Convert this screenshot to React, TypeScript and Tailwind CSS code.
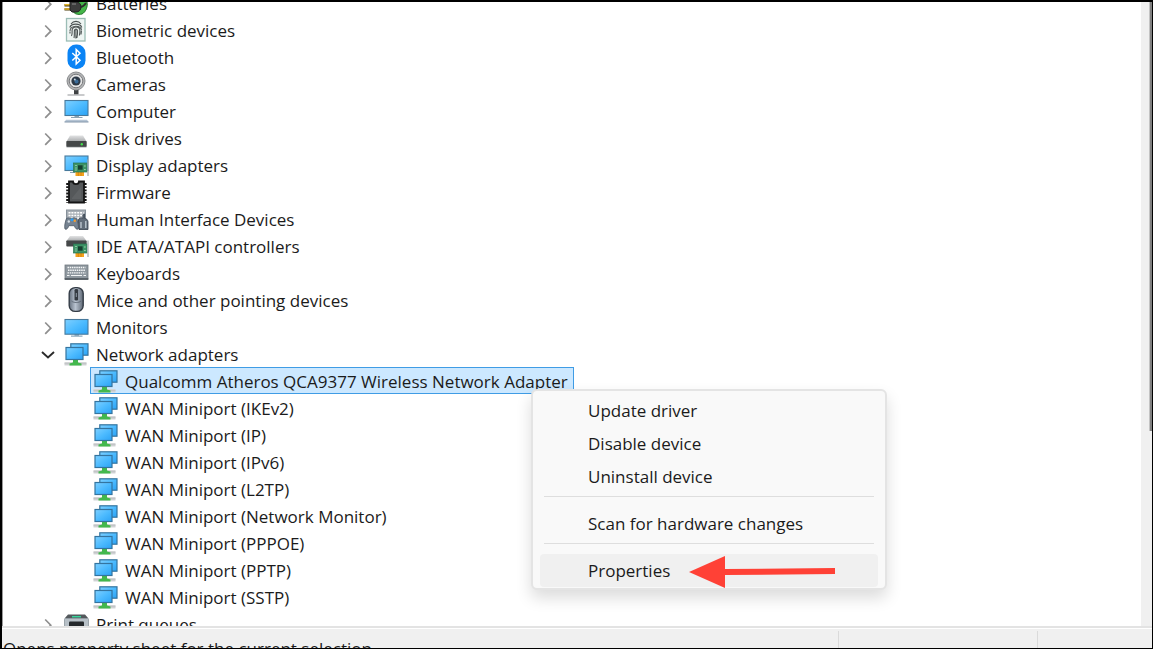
import type { ReactNode } from "react";

function Glyph({ children }: { children: ReactNode }) {
  return (
    <svg viewBox="0 0 26 27" className="h-[27px] w-[26px] shrink-0" aria-hidden="true">
      <defs>
        <linearGradient id="screen" x1="0" y1="0" x2="1" y2="1">
          <stop offset="0" stopColor="#7fd0ff" />
          <stop offset="0.5" stopColor="#4dbbff" />
          <stop offset="1" stopColor="#2ba2f5" />
        </linearGradient>
        <linearGradient id="metal" x1="0" y1="0" x2="0" y2="1">
          <stop offset="0" stopColor="#e2e3e4" />
          <stop offset="1" stopColor="#a9abad" />
        </linearGradient>
        <linearGradient id="mouse" x1="0" y1="0" x2="1" y2="0">
          <stop offset="0" stopColor="#66717f" />
          <stop offset="0.45" stopColor="#b9c3d0" />
          <stop offset="1" stopColor="#5d6774" />
        </linearGradient>
      </defs>
      {children}
    </svg>
  );
}

function Card() {
  return (
    <g>
      <rect x="11.5" y="20.5" width="8.5" height="4.5" fill="#f5a21c" />
      <path d="M14.3 21v4M17 21v4" stroke="#c87c10" strokeWidth="0.7" />
      <rect x="9.500" y="12" width="13.500" height="9" fill="#3d9366" stroke="#2a7550" strokeWidth="0.7" />
      <rect x="14" y="14.300" width="4.600" height="4.400" fill="#173f30" />
      <path d="M11.300 14.500h1.400M11.300 17h1.400M11.300 19h1.400M20.200 15h1.400M20.200 18.500h1.400" stroke="#a9dcb5" strokeWidth="1" />
      <path d="M24 8.500v16.500" stroke="#a9aeb1" strokeWidth="1.300" />
    </g>
  );
}

const icons: Record<string, ReactNode> = {
  battery: (
    <g>
      <path d="M10 18c2-5 8-7 13-5 1 4-1 10-5 12-4 1-8 0-9-3z" fill="#43b649" stroke="#23742a" />
      <path d="M0.5 16.200h7M0.5 20.400h7" stroke="#4a3a08" strokeWidth="2.400" />
      <path d="M0.5 15.800h6M0.5 20h6" stroke="#e7b92c" strokeWidth="1.500" />
      <path d="M6 13h6c3 0 5 2 5 5s-2 5-5 5H8l-2-2z" fill="#3d3d3d" stroke="#222" />
      <path d="M16 18c2 0 4-1 6-4" stroke="#2c2c2c" strokeWidth="2" fill="none" />
      <path d="M8 15h4" stroke="#8b8b8b" />
    </g>
  ),
  fingerprint: (
    <g fill="none">
      <rect x="2.500" y="2.500" width="18.500" height="22.500" fill="#eef5f3" stroke="#9bbdb6" strokeWidth="1.300" />
      <g stroke="#4b5252" strokeWidth="1.100">
        <path d="M7 8c2.500-3.500 7.500-3.500 10 0M5.800 11.500c1.500-4.500 10.500-4.500 12 0M6 15c0-6 11.500-6.500 11.500-.5" />
        <path d="M7.500 20c1-2 .5-4 .6-6 .6-4 7.200-4 7.800 0 .2 2-.2 3.500-.5 5.500M10 22c.6-2.500.2-5 .4-7.500.5-1.800 2.700-1.800 3.100 0 .2 3-.1 5-.6 7.500M11.900 14v8.500M17.400 15l-.4 3.500M6 15.500v2" />
      </g>
    </g>
  ),
  bluetooth: (
    <g>
      <rect x="3.500" y="1.500" width="18" height="24.500" rx="8.500" fill="#0a84f5" />
      <path d="M8.300 10l7.700 7.300-3.800 3.700V6.500l3.800 3.700-7.700 7.300" fill="none" stroke="#fff" strokeWidth="1.500" />
    </g>
  ),
  camera: (
    <g>
      <rect x="10" y="20" width="4.500" height="4.500" fill="#3f4143" />
      <path d="M3.500 25h17" stroke="#a5a7a9" strokeWidth="1.200" />
      <circle cx="12" cy="11" r="9" fill="#b4b5b6" stroke="#8b8d8f" strokeWidth="1" />
      <circle cx="12" cy="11" r="6.800" fill="#e4e4e4" stroke="#77797c" strokeWidth="1" />
      <circle cx="12" cy="11" r="4.600" fill="#2c3947" />
      <circle cx="12.500" cy="11.500" r="2" fill="#3a6c99" />
      <circle cx="10.800" cy="9.600" r="1" fill="#c4d6e4" />
    </g>
  ),
  computer: (
    <g>
      <path d="M10.500 18.500h4.500v1.500h3.500v1H7v-1h3.500z" fill="#8ca3b3" />
      <rect x="1" y="3.500" width="23" height="15" fill="url(#screen)" stroke="#47799c" strokeWidth="1.100" />
      <path d="M2 22.800h21l1.500 2.200H.5z" fill="#b4c3d3" />
      <path d="M.5 25h24" stroke="#8396aa" strokeWidth="1" />
    </g>
  ),
  disk: (
    <g>
      <path d="M6 11.500h13l3.500 6H2.500z" fill="url(#metal)" />
      <rect x="2.300" y="17" width="20.400" height="6" rx="0.800" fill="#454849" />
      <path d="M2.500 23.300h20" stroke="#b8babb" strokeWidth="0.800" />
      <circle cx="17.800" cy="20.300" r="1.200" fill="#43e04b" />
    </g>
  ),
  display: (
    <g>
      <rect x="1" y="5" width="23" height="14.500" fill="url(#screen)" stroke="#47799c" strokeWidth="1.100" />
      <path d="M6 21.500h5" stroke="#8ca3b3" />
      <Card />
    </g>
  ),
  firmware: (
    <g>
      <path d="M5 3.500h4c0 3.500 6 3.500 6 0h5v21H5z" fill="#55585a" stroke="#151515" strokeWidth="1.800" />
      <path d="M3.500 5v20M21.300 5v20" stroke="#151515" strokeWidth="2.600" strokeDasharray="1.900 1.300" />
      <path d="M8 20l9-11v12H8z" fill="#66696b" opacity="0.600" />
    </g>
  ),
  hid: (
    <g>
      <rect x="2.500" y="5" width="19" height="13" fill="#a8afb6" stroke="#87919a" />
      <path d="M4.500 7.800h15M4.500 10.500h15M4.500 13h15" stroke="#fff" strokeWidth="1.500" strokeDasharray="2 .9" />
      <path d="M2.500 13.500c2-1.200 4-.5 5 .2 1-.7 3-1.400 5-.2 1.200 3 2.500 8 1.700 10.500-1.700.8-3-.6-3.800-3.300H4.800C4 23.300 2.500 25 1 24c-.8-2.500.2-7.500 1.500-10.500z" fill="#768391" stroke="#4b5764" strokeWidth="0.800" />
      <circle cx="4.800" cy="16.500" r="1.200" fill="#d7dee5" />
      <circle cx="8" cy="14.800" r="1.500" fill="#2d9df0" />
      <circle cx="10.800" cy="15.700" r="1.200" fill="#f39b2d" />
      <path d="M14.500 15c1-2.500 3-3 4.500-1.500V10l1.500-1v4.500c2 0 3 1 3.500 3v8h-9z" fill="#626d79" stroke="#35404c" strokeWidth="0.800" />
      <path d="M17 17v6M21.800 16v7" stroke="#c2ccd5" strokeWidth="1.300" />
    </g>
  ),
  ide: (
    <g>
      <path d="M6 4h13l3.500 5H2.500z" fill="url(#metal)" />
      <rect x="2.300" y="8.500" width="20.400" height="6" rx="0.800" fill="#454849" />
      <Card />
    </g>
  ),
  keyboard: (
    <g>
      <rect x="1" y="6" width="23" height="14" fill="#8e979e" stroke="#727a81" strokeWidth="0.800" />
      <path d="M3.500 8.500h18M4 11.200h17M3.500 13.900h18" stroke="#f5f7f8" strokeWidth="1.400" strokeDasharray="1.500 .7" />
      <path d="M3 16.500h2.500M7 16.500h11M19.500 16.500h2.500" stroke="#f5f7f8" strokeWidth="1.200" />
      <path d="M.7 20h23.600" stroke="#555d64" strokeWidth="1.800" />
    </g>
  ),
  mouse: (
    <g>
      <rect x="5.200" y="1.600" width="14" height="23.800" rx="6" fill="url(#mouse)" stroke="#343c46" strokeWidth="1.400" />
      <path d="M7.500 15c2 2 7.500 2 9.500 0" stroke="#56606c" strokeWidth="0.800" fill="none" />
      <rect x="10.500" y="3" width="3.600" height="11.500" rx="1.200" fill="#343a42" />
      <path d="M12.300 7v4" stroke="#8e99a5" strokeWidth="1" />
    </g>
  ),
  monitor: (
    <g>
      <path d="M10.500 21h4.500v1.600h3.500v1.200H7v-1.200h3.500z" fill="#8ca9bd" />
      <rect x="1" y="6.500" width="23" height="14.700" fill="url(#screen)" stroke="#47799c" strokeWidth="1.100" />
    </g>
  ),
  network: (
    <g>
      <rect x="0.500" y="22" width="22" height="3.500" fill="#d4d6d7" />
      <path d="M.5 23.700h22" stroke="#b6b9bb" strokeWidth="0.700" />
      <path d="M9 19.500h5v3l3.500 1v2H5.500v-2l3.500-1z" fill="#43b84d" />
      <rect x="6.800" y="3.800" width="17.200" height="11.400" fill="url(#screen)" stroke="#34749f" strokeWidth="1.200" />
      <rect x="2" y="7.500" width="17" height="12" fill="url(#screen)" stroke="#34749f" strokeWidth="1.200" />
    </g>
  ),
  printer: (
    <g>
      <path d="M4 4.500h17l3.500 4H.5z" fill="#53585c" />
      <path d="M8 6.700h9" stroke="#37d59b" strokeWidth="1.500" />
      <rect x="0.500" y="8.500" width="24" height="15" rx="1" fill="#b7c0c7" stroke="#8b959d" strokeWidth="0.800" />
      <rect x="5" y="11.500" width="15" height="8" rx="1" fill="#25292c" />
    </g>
  ),
};

type Category = { label: string; icon: string; children?: string[] };

const categories: Category[] = [
  { label: "Batteries", icon: "battery" },
  { label: "Biometric devices", icon: "fingerprint" },
  { label: "Bluetooth", icon: "bluetooth" },
  { label: "Cameras", icon: "camera" },
  { label: "Computer", icon: "computer" },
  { label: "Disk drives", icon: "disk" },
  { label: "Display adapters", icon: "display" },
  { label: "Firmware", icon: "firmware" },
  { label: "Human Interface Devices", icon: "hid" },
  { label: "IDE ATA/ATAPI controllers", icon: "ide" },
  { label: "Keyboards", icon: "keyboard" },
  { label: "Mice and other pointing devices", icon: "mouse" },
  { label: "Monitors", icon: "monitor" },
  {
    label: "Network adapters",
    icon: "network",
    children: [
      "Qualcomm Atheros QCA9377 Wireless Network Adapter",
      "WAN Miniport (IKEv2)",
      "WAN Miniport (IP)",
      "WAN Miniport (IPv6)",
      "WAN Miniport (L2TP)",
      "WAN Miniport (Network Monitor)",
      "WAN Miniport (PPPOE)",
      "WAN Miniport (PPTP)",
      "WAN Miniport (SSTP)",
    ],
  },
  { label: "Print queues", icon: "printer" },
];

const menuGroups = [
  ["Update driver", "Disable device", "Uninstall device"],
  ["Scan for hardware changes"],
  ["Properties"],
];

function Chevron({ open }: { open: boolean }) {
  return (
    <svg viewBox="0 0 16 27" className="h-[27px] w-4" fill="none" aria-hidden="true">
      {open ? (
        <path d="M2 12l6 5.500 6-5.500" stroke="#2b2b2b" strokeWidth="1.900" />
      ) : (
        <path d="M5.200 9.500l5.600 5.700-5.600 5.700" stroke="#8f8f8f" strokeWidth="1.700" />
      )}
    </svg>
  );
}

function DeviceTree() {
  return (
    <ul role="tree" aria-label="Devices" className="-mt-[13px] pl-[37px]">
      {categories.map((category) => (
        <li key={category.label} role="treeitem" aria-expanded={!!category.children}>
          <button type="button" className="flex h-[27px] items-center whitespace-nowrap">
            <Chevron open={!!category.children} />
            <span className="w-2" />
            <Glyph>{icons[category.icon]}</Glyph>
            <span className="pt-[2px] pl-[6px]">{category.label}</span>
          </button>
          {category.children && (
            <ul role="group" className="pl-[50px]">
              {category.children.map((name, index) => (
                <li key={name} role="treeitem" aria-selected={index === 0} className="flex">
                  <button
                    type="button"
                    className={
                      index === 0
                        ? "flex h-[27px] items-center whitespace-nowrap border border-[#3f9ce5] bg-[#cce8ff] pr-[5px] pl-[2px]"
                        : "flex h-[27px] items-center whitespace-nowrap border border-transparent pr-[5px] pl-[2px]"
                    }
                  >
                    <Glyph>{icons.network}</Glyph>
                    <span className="pt-[2px] pl-[6px]">{name}</span>
                  </button>
                </li>
              ))}
            </ul>
          )}
        </li>
      ))}
    </ul>
  );
}

function ContextMenu() {
  return (
    <div
      role="menu"
      className="absolute top-[387px] left-[528px] w-[356px] rounded-[6px] border-2 border-[#e4e4e4] bg-[#f9f9f9] pt-[3px] pr-[7px] pb-px pl-[7px] shadow-[0_8px_16px_rgba(0,0,0,0.14)]"
    >
      {menuGroups.map((group, index) => (
        <div key={group[0]} role="group">
          {index > 0 && <div role="separator" className="mx-1 mt-[3px] mb-[10px] h-px bg-[#dedede]" />}
          {group.map((label) => (
            <button
              key={label}
              type="button"
              role="menuitem"
              className={
                label === "Properties"
                  ? "flex h-[33px] w-full items-center rounded bg-[#f0f0f0] pl-12"
                  : "flex h-[33px] w-full items-center rounded pl-12"
              }
            >
              {label}
            </button>
          ))}
        </div>
      ))}
      <svg viewBox="0 0 146 32" className="absolute right-[50px] bottom-0 h-8 w-[146px]" aria-hidden="true">
        <path d="M0 16L36 0v13l110-1v6l-110 1v13z" fill="#ff4136" />
      </svg>
    </div>
  );
}

export default function App() {
  return (
    <div className="flex h-screen flex-col overflow-hidden border-t-2 border-r border-b border-l-2 border-black bg-white font-['Open_Sans','Noto_Sans',sans-serif] text-[17px] leading-[27px] text-[#1b1b1b]">
      <main className="relative flex min-h-0 flex-1 overflow-hidden border-l border-[#9a9a9a]">
        <div className="min-w-0 flex-1">
          <DeviceTree />
        </div>
        <div className="flex w-[11px] justify-end bg-[#f0f0f0]">
          <div className="h-[429px] w-[3px] border-l border-[#c4c4c4] bg-[#808080]" />
        </div>
        <ContextMenu />
      </main>
      <footer className="h-[22px] shrink-0 overflow-hidden border-t-2 border-[#e3e3e3] bg-[#f0f0f0]">
        <div className="flex border-t border-white">
          <p className="min-w-0 flex-1 pt-[6px] pl-px whitespace-nowrap">
            Opens property sheet for the current selection
          </p>
          <div className="mt-[2px] w-[199px] border-l border-[#dadada]" />
          <div className="mt-[2px] w-[115px] border-l border-[#dadada]" />
        </div>
      </footer>
    </div>
  );
}
